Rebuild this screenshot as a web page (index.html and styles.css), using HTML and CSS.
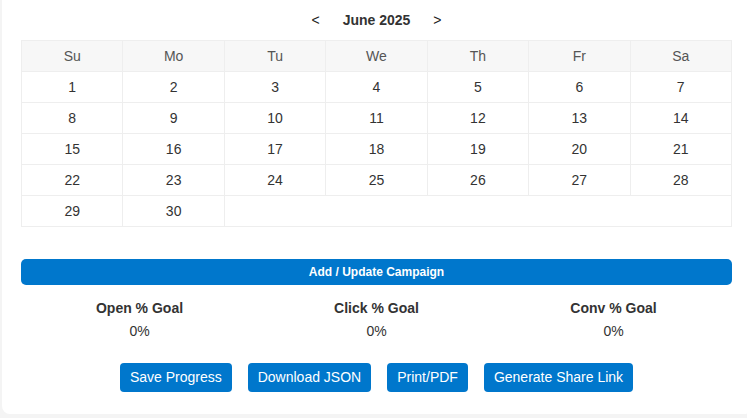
FILE: index.html
```html
<!DOCTYPE html>
<html lang="en">
  <head>
    <meta charset="UTF-8" />
    <meta name="viewport" content="width=device-width, initial-scale=1.0" />
    <title>Campaign Planner</title>
    <link rel="stylesheet" href="styles.css">
  </head>
  <body>
    <div class="card">
      <!-- Month Navigation -->
      <div class="month-nav">
        <span class="nav-arrow">&lt;</span>
        <span class="month-title">June 2025</span>
        <span class="nav-arrow">&gt;</span>
      </div>

      <!-- Calendar -->
      <table class="calendar">
        <thead>
          <tr>
            <th>Su</th><th>Mo</th><th>Tu</th><th>We</th><th>Th</th><th>Fr</th><th>Sa</th>
          </tr>
        </thead>
        <tbody>
          <tr><td>1</td><td>2</td><td>3</td><td>4</td><td>5</td><td>6</td><td>7</td></tr>
          <tr><td>8</td><td>9</td><td>10</td><td>11</td><td>12</td><td>13</td><td>14</td></tr>
          <tr><td>15</td><td>16</td><td>17</td><td>18</td><td>19</td><td>20</td><td>21</td></tr>
          <tr><td>22</td><td>23</td><td>24</td><td>25</td><td>26</td><td>27</td><td>28</td></tr>
          <tr><td>29</td><td>30</td><td colspan="5"></td></tr>
        </tbody>
      </table>

      <!-- Campaign Button -->
      <button class="wide-btn">Add / Update Campaign</button>

      <!-- Goals -->
      <div class="goals">
        <div class="goal">
          <div class="goal-label">Open % Goal</div>
          <div class="goal-value">0%</div>
        </div>
        <div class="goal">
          <div class="goal-label">Click % Goal</div>
          <div class="goal-value">0%</div>
        </div>
        <div class="goal">
          <div class="goal-label">Conv % Goal</div>
          <div class="goal-value">0%</div>
        </div>
      </div>

      <!-- Actions -->
      <div class="actions">
        <button class="btn">Save Progress</button>
        <button class="btn">Download JSON</button>
        <button class="btn">Print/PDF</button>
        <button class="btn">Generate Share Link</button>
      </div>
    </div>
  </body>
</html>
```

FILE: styles.css
```css
/* General Layout */
html {
  overflow: hidden;
}

body {
  font-family: "Liberation Sans", Arial, sans-serif;
  background-color: #f4f4f4;
  color: #333;
  margin: 0;
}

.card {
  background-color: #fff;
  margin-left: 2px;
  width: 711px;
  padding: 10px 20px 22px 19px;
  border-radius: 0 0 8px 8px;
}

/* Month Navigation */
.month-nav {
  display: flex;
  justify-content: center;
  align-items: center;
  height: 20px;
  margin-bottom: 10px;
  font-size: 14px;
}

.nav-arrow {
  color: #222;
  padding: 0 10px;
}

.month-title {
  font-weight: bold;
  color: #333;
  margin: 0 13px;
}

/* Calendar */
.calendar {
  width: 100%;
  border-collapse: collapse;
  table-layout: fixed;
  font-size: 14px;
}

.calendar th,
.calendar td {
  border: 1px solid #eee;
  text-align: center;
  padding: 7px 0;
  line-height: 16px;
  height: 16px;
}

.calendar th {
  background-color: #f7f7f7;
  font-weight: normal;
  color: #555;
}

.calendar td {
  color: #333;
}

/* Buttons */
.wide-btn {
  display: block;
  width: 100%;
  margin-top: 32px;
  padding: 6px 0;
  line-height: 14px;
  font-family: inherit;
  font-size: 12px;
  font-weight: bold;
  color: #fff;
  background-color: #0077cc;
  border: none;
  border-radius: 5px;
  cursor: pointer;
}

/* Goals */
.goals {
  display: grid;
  grid-template-columns: repeat(3, 1fr);
  margin-top: 15px;
  text-align: center;
  font-size: 14px;
}

.goal-label {
  font-weight: bold;
  line-height: 16px;
  margin-bottom: 7px;
}

.goal-value {
  line-height: 16px;
}

.actions {
  display: flex;
  justify-content: center;
  gap: 16px;
  margin-top: 24px;
}

.btn {
  padding: 6px 10px;
  line-height: 17px;
  font-family: inherit;
  font-size: 14px;
  color: #fff;
  background-color: #0077cc;
  border: none;
  border-radius: 4px;
  cursor: pointer;
}

.btn:hover,
.wide-btn:hover {
  opacity: 0.9;
}
```
